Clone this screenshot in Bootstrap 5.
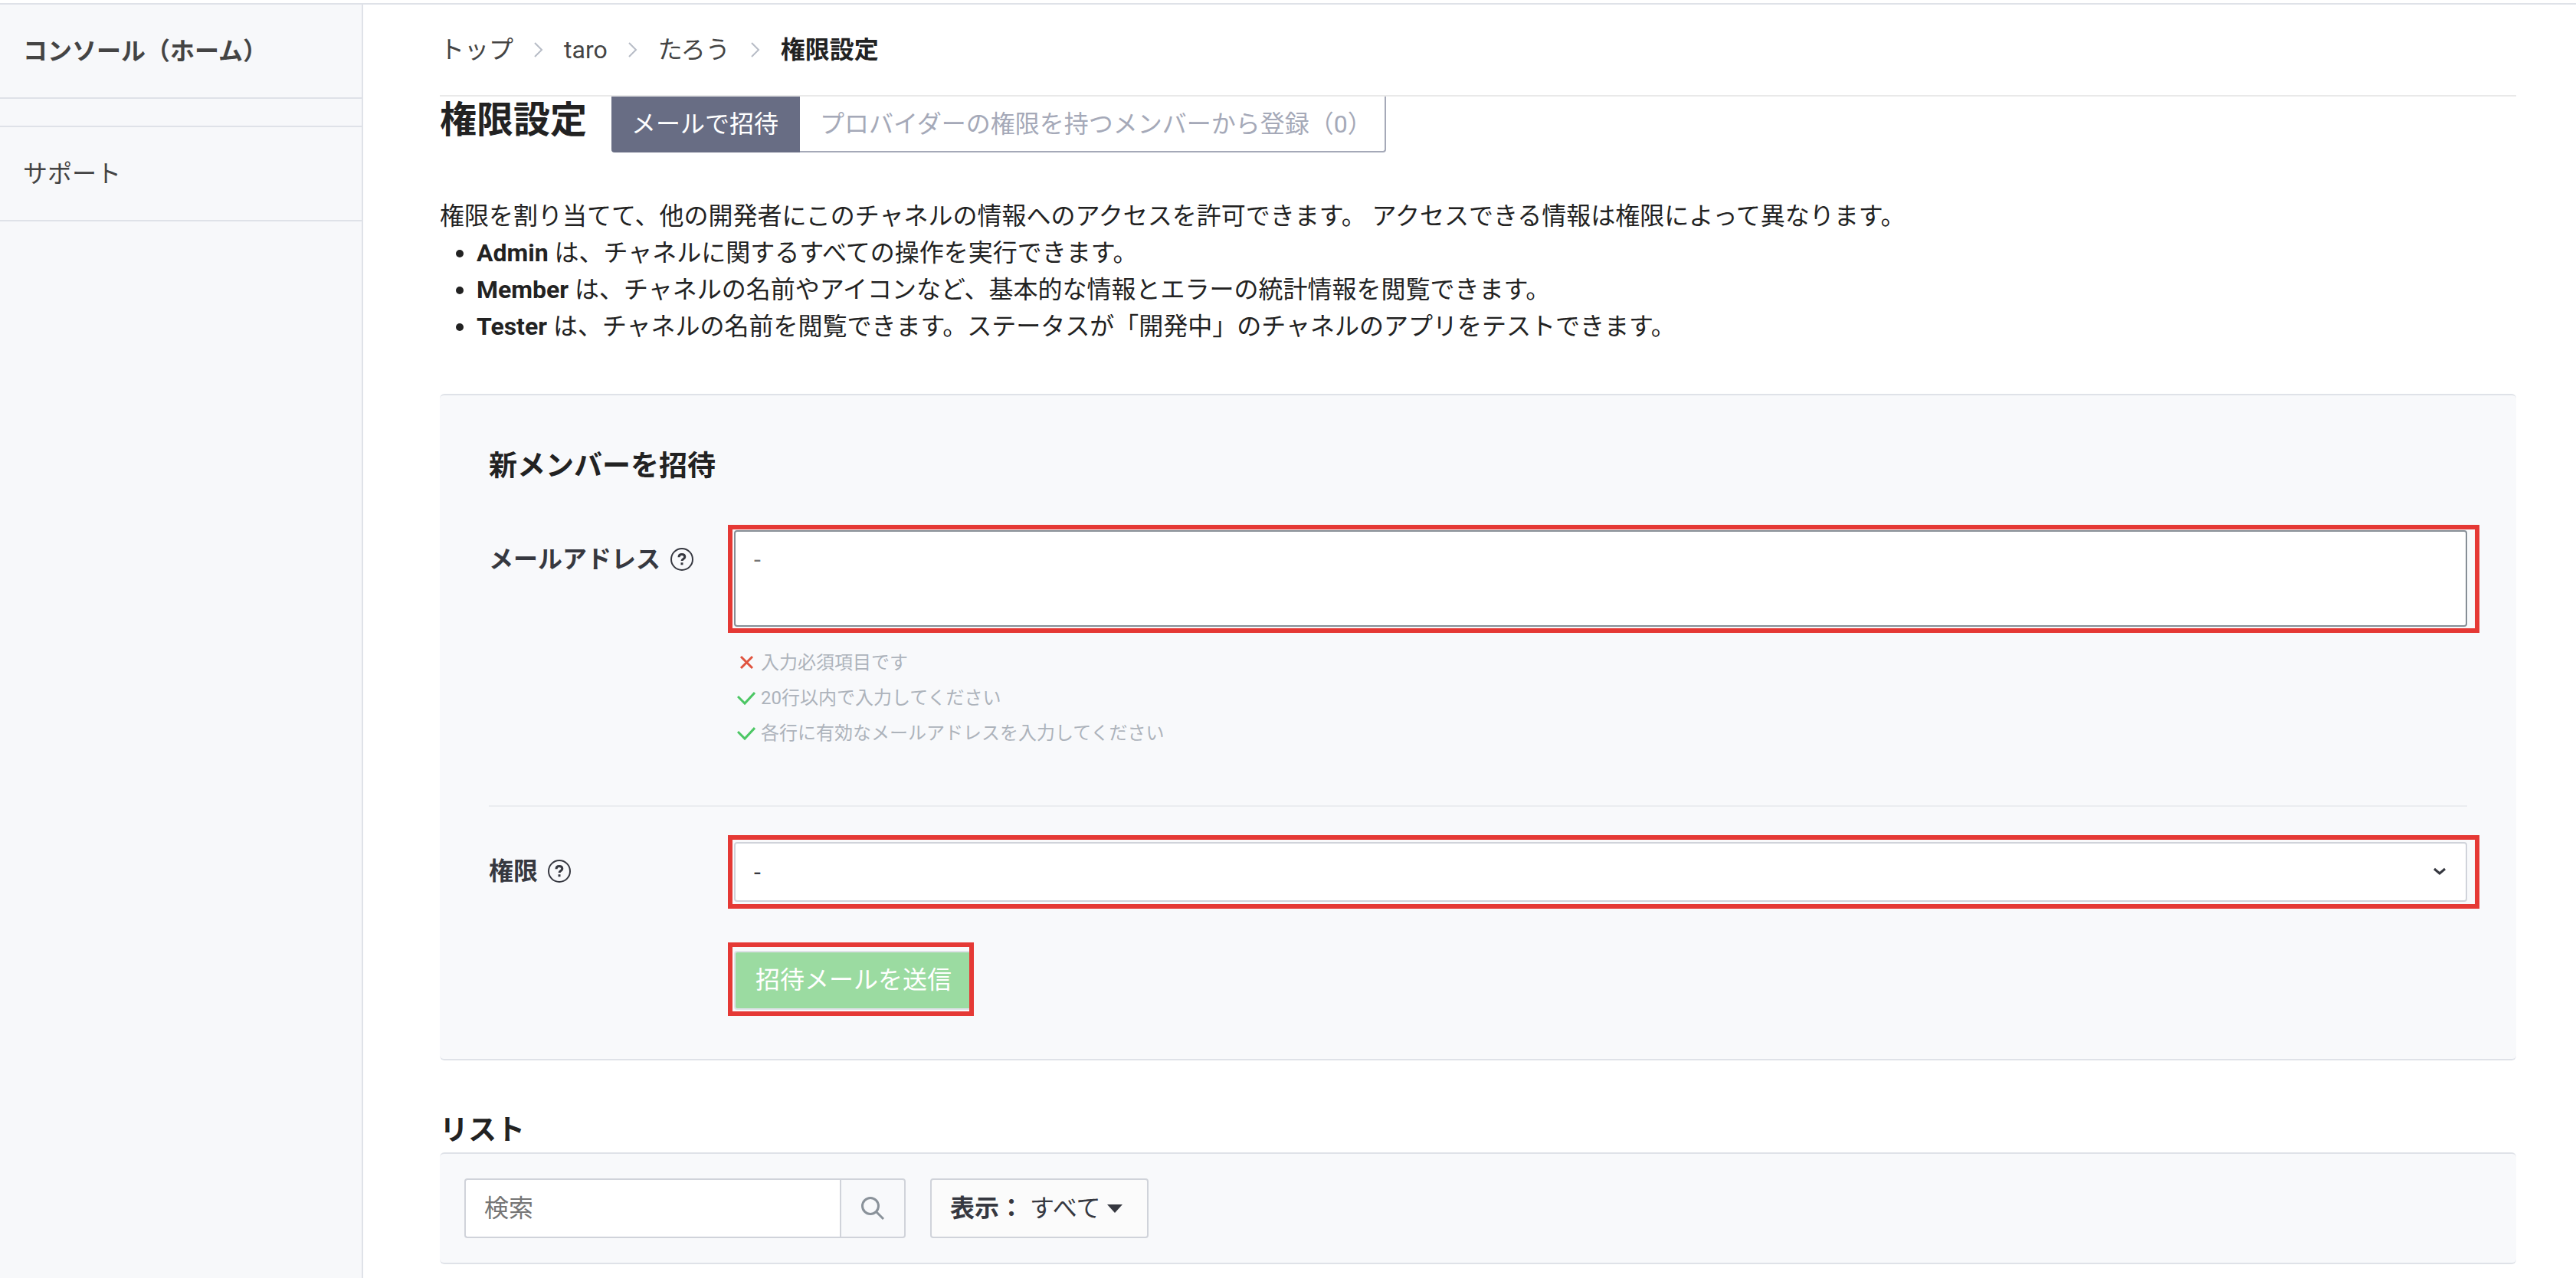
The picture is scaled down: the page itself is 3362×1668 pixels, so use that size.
<!DOCTYPE html>
<html lang="ja">
<head>
<meta charset="utf-8">
<meta name="viewport" content="width=device-width, initial-scale=1">
<title>権限設定</title>
<link href="https://cdn.jsdelivr.net/npm/bootstrap@5.3.0/dist/css/bootstrap.min.css" rel="stylesheet">
<style>
  body { font-family: Roboto, "Noto Sans CJK JP", sans-serif; font-size: 32px; line-height: 48px; color: #222; background: #fff; }
  a { text-decoration: none; }
  .app-shell { margin-top: 4px; border-top: 2px solid #dfe2e8; min-height: calc(100vh - 4px); }
  .side-nav { flex: 0 0 474px; background: #f7f8fa; border-right: 2px solid #dfe2e8; }
  .side-link { display: block; padding: 37px 30px 36px; color: #444; border-bottom: 2px solid #dfe2e8; }
  .side-gap { height: 37px; border-bottom: 2px solid #dfe2e8; }
  .page-main { min-width: 0; padding: 0 78px 16px 100px; }
  .page-head { padding: 35px 0 35px; border-bottom: 2px solid #e9e9e9; }
  .page-head .breadcrumb { gap: 27px; }
  .page-head a { color: #444; }
  .crumb-sep { width: 12px; height: 20px; fill: none; stroke: #b7bcc6; stroke-width: 2; }
  .page-title { font-size: 48px; line-height: 62px; font-weight: 700; }
  .tab-link { display: block; padding: 12px 26px 11px; border: 2px solid #a5a9b8; border-top: 0; border-left: 0; border-radius: 0 0 4px 0; color: #a5a9b8; }
  .tab-link:last-child { padding-right: 16px; }
  .tab-link.active { background: #686d84; border-color: #686d84; color: #fff; border-radius: 0 0 0 4px; }
  .intro { margin: 59px 0 64px; }
  .intro ul { padding-left: 48px; }
  .panel { background: #f8f9fb; border: solid #dfe2e8; border-width: 2px 0; border-radius: 6px; }
  .invite { padding: 66px 64px 64px; }
  .section-title { font-size: 37px; line-height: 54px; font-weight: 700; }
  .invite .section-title { margin-bottom: 56px; }
  .list-title { margin: 65px 0 1px; }
  .field-label { flex: 0 0 320px; padding-top: 14px; color: #363840; gap: 12px; }
  .help-icon { width: 32px; height: 32px; fill: none; stroke: #363840; stroke-width: 2; }
  .help-icon path { stroke-width: 3; }
  .field { border: 2px solid #d0d3da; border-radius: 4px; background-color: #fff; color: #363840; font-size: 32px; line-height: 48px; padding: 13px 24px; width: 100%; display: block; }
  .field::placeholder { color: #757575; opacity: 1; }
  textarea.field { height: 126px; padding-top: 12px; border-color: #868e96; resize: none; }
  select.field { appearance: none; }
  .select-mark { right: 27px; top: 33px; width: 18px; height: 12px; fill: none; stroke: #363840; stroke-width: 3; pointer-events: none; }
  .hints { margin: 24px 0 71px; font-size: 24px; line-height: 46px; color: #adb3bb; }
  .hints li { gap: 7px; padding-left: 4px; }
  .hints svg { width: 24px; height: 20px; fill: none; stroke-width: 3; }
  .rule { border-top: 2px solid #ebedf0; margin-bottom: 46px; }
  /* red annotation frames over the controls */
  .marked { position: relative; }
  .marked::after { content: ""; position: absolute; border: 6px solid #e53935; pointer-events: none; inset: -9px -16px -9px -8px; }
  .marked.is-tall::after { inset: -7px -16px -8px -8px; }
  .marked.is-button { margin-top: 64px; }
  .marked.is-button::after { inset: -11px -1px -8px -8px; }
  .btn-send { border: 2px solid #dfe2e8; border-radius: 4px; background: #9bdba1; color: #fff; padding: 12px 24px 13px; height: 77px; width: 312px; display: block; white-space: nowrap; }
  .filters { padding: 32px; gap: 32px; }
  .search-group { width: 576px; }
  .search-group .field { border-radius: 4px 0 0 4px; border-right: 0; min-width: 0; }
  .search-btn { flex: 0 0 86px; border: 2px solid #d0d3da; border-radius: 0 4px 4px 0; background: #f8f9fb; padding: 0; }
  .search-btn svg { width: 32px; height: 32px; fill: none; stroke: #8a929a; stroke-width: 3; display: block; margin: auto; }
  .show-btn { border: 2px solid #d0d3da; border-radius: 4px; background: #fbfbfb; color: #363840; padding: 13px 32px 13px 24px; }
  .caret { width: 20px; height: 11px; fill: #363840; }
</style>
<script src="https://cdn.jsdelivr.net/npm/bootstrap@5.3.0/dist/js/bootstrap.bundle.min.js"></script>
</head>
<body>
<div class="app-shell d-flex">
  <nav class="side-nav">
    <a href="#" class="side-link fw-bold">コンソール（ホーム）</a>
    <div class="side-gap"></div>
    <a href="#" class="side-link">サポート</a>
  </nav>
  <main class="page-main flex-grow-1">
    <header class="page-head">
      <ol class="breadcrumb mb-0 align-items-center">
        <li><a href="#">トップ</a></li>
        <li class="d-flex"><svg class="crumb-sep" viewBox="0 0 12 20"><path d="M1 1l9 9-9 9"/></svg></li>
        <li><a href="#">taro</a></li>
        <li class="d-flex"><svg class="crumb-sep" viewBox="0 0 12 20"><path d="M1 1l9 9-9 9"/></svg></li>
        <li><a href="#">たろう</a></li>
        <li class="d-flex"><svg class="crumb-sep" viewBox="0 0 12 20"><path d="M1 1l9 9-9 9"/></svg></li>
        <li class="fw-bold" aria-current="page">権限設定</li>
      </ol>
    </header>

    <div class="d-flex align-items-start gap-4">
      <h1 class="page-title mb-0 pe-2">権限設定</h1>
      <div class="d-flex">
        <a href="#" class="tab-link active">メールで招待</a>
        <a href="#" class="tab-link">プロバイダーの権限を持つメンバーから登録（0）</a>
      </div>
    </div>

    <div class="intro">
      <p class="mb-0">権限を割り当てて、他の開発者にこのチャネルの情報へのアクセスを許可できます。 アクセスできる情報は権限によって異なります。</p>
      <ul class="mb-0">
        <li><b>Admin</b> は、チャネルに関するすべての操作を実行できます。</li>
        <li><b>Member</b> は、チャネルの名前やアイコンなど、基本的な情報とエラーの統計情報を閲覧できます。</li>
        <li><b>Tester</b> は、チャネルの名前を閲覧できます。ステータスが「開発中」のチャネルのアプリをテストできます。</li>
      </ul>
    </div>

    <form class="panel invite">
      <h2 class="section-title">新メンバーを招待</h2>
      <div class="d-flex">
        <div class="field-label d-flex">
          <label for="mail" class="fw-bold">メールアドレス</label>
          <svg class="help-icon mt-2" viewBox="0 0 32 32"><circle cx="16" cy="16" r="14"/><path d="M12 13.300c0-2.300 1.600-3.800 3.900-3.800s3.900 1.400 3.900 3.400c0 2.600-3.700 2.600-3.700 5.100M16 20.200v3"/></svg>
        </div>
        <div class="flex-grow-1">
          <div class="marked is-tall"><textarea id="mail" class="field" placeholder="-"></textarea></div>
          <ul class="hints list-unstyled">
            <li class="d-flex align-items-center"><svg viewBox="0 0 24 20" stroke="#e0543f"><path d="M5 2l15 15M20 2L5 17"/></svg>入力必須項目です</li>
            <li class="d-flex align-items-center"><svg viewBox="0 0 24 20" stroke="#4cc764"><path d="M1 8l9 9L23 3"/></svg>20行以内で入力してください</li>
            <li class="d-flex align-items-center"><svg viewBox="0 0 24 20" stroke="#4cc764"><path d="M1 8l9 9L23 3"/></svg>各行に有効なメールアドレスを入力してください</li>
          </ul>
        </div>
      </div>
      <div class="rule"></div>
      <div class="d-flex">
        <div class="field-label d-flex">
          <label for="role" class="fw-bold">権限</label>
          <svg class="help-icon mt-2" viewBox="0 0 32 32"><circle cx="16" cy="16" r="14"/><path d="M12 13.300c0-2.300 1.600-3.800 3.900-3.800s3.900 1.400 3.900 3.400c0 2.600-3.700 2.600-3.700 5.100M16 20.200v3"/></svg>
        </div>
        <div class="flex-grow-1">
          <div class="marked">
            <select id="role" class="field"><option>-</option></select>
            <svg class="select-mark position-absolute" viewBox="0 0 18 12"><path d="M2 2l7 6 7-6"/></svg>
          </div>
          <div class="marked is-button d-inline-block align-top">
            <button type="button" class="btn-send">招待メールを送信</button>
          </div>
        </div>
      </div>
    </form>

    <h2 class="section-title list-title">リスト</h2>
    <div class="panel filters d-flex">
      <div class="search-group d-flex">
        <input type="search" class="field" placeholder="検索" aria-label="検索">
        <button type="button" class="search-btn" aria-label="検索"><svg viewBox="0 0 32 32"><circle cx="13" cy="13" r="10.500"/><path d="M20.500 20.500L30 30"/></svg></button>
      </div>
      <button type="button" class="show-btn d-flex align-items-center"><b>表示：</b><span class="ms-2">すべて</span><svg class="caret ms-2" viewBox="0 0 20 11"><path d="M0 0h20L10 11z"/></svg></button>
    </div>
  </main>
</div>
</body>
</html>
